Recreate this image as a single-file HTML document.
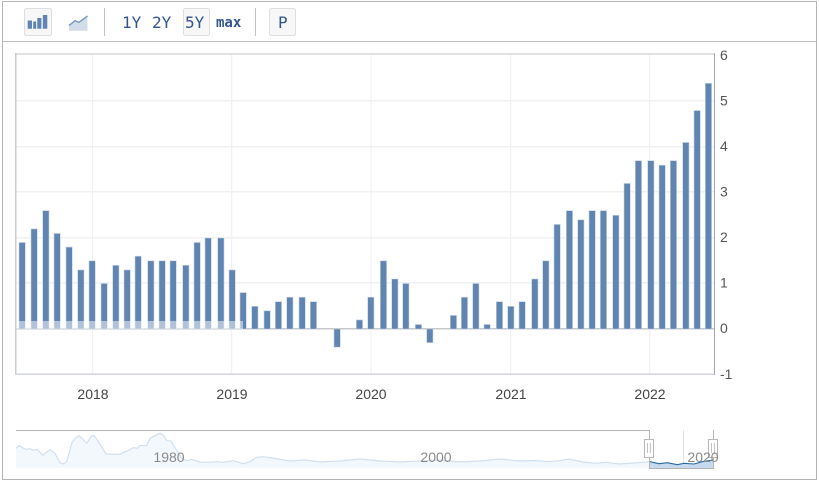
<!DOCTYPE html>
<html><head><meta charset="utf-8"><style>
html,body{margin:0;padding:0;background:#fff;width:819px;height:483px;overflow:hidden}
svg{display:block}
text{font-family:"Liberation Sans",sans-serif}
text.m{font-family:"DejaVu Sans Mono",monospace}
</style></head><body>
<svg width="819" height="483" viewBox="0 0 819 483" xmlns="http://www.w3.org/2000/svg">
<rect x="2.5" y="1.5" width="814" height="478" fill="#fff" stroke="#b4b4b4"/>
<rect x="3" y="41" width="813" height="1" fill="#bfbfbf"/>
<!-- toolbar -->
<rect x="24.5" y="8.5" width="27" height="27" rx="2" fill="#f7f7f7" stroke="#dedede"/>
<rect x="183.5" y="8.5" width="26" height="27" rx="2" fill="#f7f7f7" stroke="#dedede"/>
<rect x="269.5" y="8.5" width="26" height="27" rx="2" fill="#f7f7f7" stroke="#dedede"/>
<rect x="104" y="8" width="1" height="28" fill="#c4c4c4"/>
<rect x="255" y="8" width="1" height="28" fill="#c4c4c4"/>
<path d="M27.700 20.500h4.300v8.200h-4.300zM33.200 21.500h3v7.200h-3zM37.300 18h4.100v10.700h-4.100zM42.800 15h4.500v13.700h-4.500z" fill="#5f85b0"/>
<path d="M69 25.500L75 20.700L79 22.300L87.500 16V30.700H69z" fill="#d3dce9"/>
<path d="M69 25.500L75 20.700L79 22.300L87.500 16" fill="none" stroke="#7f9cc2" stroke-width="1.500"/>
<g font-size="16" fill="#33558f">
<text class="m" x="122" y="28">1Y</text>
<text class="m" x="152" y="28">2Y</text>
<text class="m" x="185" y="28">5Y</text>
<text class="m" x="216" y="27" font-size="14" font-weight="700">max</text>
<text class="m" x="278" y="28">P</text>
</g>
<!-- grid -->
<g fill="#f1f1f3">
<rect x="16" y="100" width="698" height="1.500"/>
<rect x="16" y="146" width="698" height="1.500"/>
<rect x="16" y="191" width="698" height="1.500"/>
<rect x="16" y="237" width="698" height="1.500"/>
<rect x="16" y="282" width="698" height="1.500"/>
<rect x="92" y="54" width="1.200" height="320"/>
<rect x="231" y="54" width="1.200" height="320"/>
<rect x="370.500" y="54" width="1.200" height="320"/>
<rect x="510" y="54" width="1.200" height="320"/>
<rect x="649" y="54" width="1.200" height="320"/>
</g>
<rect x="16" y="328" width="698" height="1.500" fill="#c8c8c8"/>
<!-- plot border -->
<rect x="15" y="53" width="700" height="2" fill="#e2e2e2"/>
<rect x="15" y="53" width="1.500" height="322" fill="#c8cbd0"/>
<rect x="15" y="373.500" width="700" height="1.500" fill="#d2d6dc"/>
<rect x="714" y="53" width="1" height="322" fill="#a8a8a8"/>
<!-- bars -->
<path fill="#5f85b0" stroke="#c3d3e7" stroke-width=".6" d="M19 242.500h6.300V329H19zM31 228.900h6.300V329H31zM42.700 210.700h6.300V329h-6.300zM54 233.500h6.300V329H54zM66 247.100h6.300V329H66zM77.700 269.900h6.300V329h-6.300zM89 260.800h6.300V329H89zM101 283.500h6.300V329H101zM112.700 265.300h6.300V329h-6.300zM124 269.900h6.300V329H124zM135 256.200h6.300V329H135zM147.700 260.800h6.300V329h-6.300zM159 260.800h6.300V329H159zM170 260.800h6.300V329H170zM182.700 265.300h6.300V329h-6.300zM194 242.500h6.300V329H194zM205 238h6.300V329H205zM217.700 238h6.300V329h-6.300zM229 269.900h6.300V329H229zM240 292.600h6.300V329H240zM251.700 306.300h6.300V329h-6.300zM264 310.800h6.300V329H264zM275.300 301.700h6.300V329h-6.300zM286.700 297.200h6.300V329h-6.300zM299 297.200h6.300V329H299zM310.300 301.700h6.300V329h-6.300zM334 329h6.300v18.200H334zM356.300 319.900h6.300V329h-6.300zM367.700 297.200h6.300V329h-6.300zM380.300 260.800h6.300V329h-6.300zM391.700 279h6.300V329h-6.300zM402.700 283.500h6.300V329h-6.300zM415.300 324.500h6.300V329h-6.300zM426.700 329h6.300v13.700h-6.300zM450.300 315.400h6.300V329h-6.300zM461.300 297.200h6.300V329h-6.300zM472.700 283.500h6.300V329h-6.300zM484 324.500h6.300V329H484zM496.300 301.700h6.300V329h-6.300zM507.700 306.300h6.300V329h-6.300zM519 301.700h6.300V329H519zM531.700 279h6.300V329h-6.300zM542.700 260.800h6.300V329h-6.300zM554 224.400h6.300V329H554zM566.300 210.700h6.300V329h-6.300zM577.700 219.800h6.300V329h-6.300zM589 210.700h6.300V329H589zM600.300 210.700h6.300V329h-6.300zM612.700 215.300h6.300V329h-6.300zM624 183.400h6.300V329H624zM635.300 160.700h6.300V329h-6.300zM647.700 160.700h6.300V329h-6.300zM659 165.200h6.300V329H659zM670.300 160.700h6.300V329h-6.300zM682.700 142.500h6.300V329h-6.300zM694 110.600h6.300V329H694zM705.300 83.300h6.300V329h-6.300z"/>
<rect x="16.500" y="321" width="226.500" height="8" fill="#fff" fill-opacity=".5"/>
<!-- labels -->
<g font-size="14" fill="#555">
<text x="720" y="60">6</text>
<text x="720" y="105.500">5</text>
<text x="720" y="151">4</text>
<text x="720" y="196.500">3</text>
<text x="720" y="242">2</text>
<text x="720" y="287.500">1</text>
<text x="720" y="333">0</text>
<text x="720" y="379">-1</text>
</g>
<g font-size="14" fill="#444" text-anchor="middle">
<text x="93" y="399">2018</text>
<text x="232" y="399">2019</text>
<text x="371" y="399">2020</text>
<text x="511" y="399">2021</text>
<text x="650" y="399">2022</text>
</g>
<!-- navigator -->
<path d="M16 448.300L19.300 445.300L23.300 448.300L26.700 449.300L30 448.700L33.300 450.300L37.300 449.300L42.700 455.300L50 449.700L55 453.300L60 462.700L63.300 464L66.700 461.700L71.700 443.300L75 438.300L79.300 435.700L82.700 439L86.700 443.300L91.700 435.700L94.300 435.700L98.300 441.700L106 454L120 454.300L123.300 452.300L128.300 450.700L133.300 447.700L137.300 448.300L140 445.300L146.700 445.700L150 438.300L155 435.700L160 433.300L163.300 435L166.700 440.700L170.700 441L175 447.700L181.700 458.300L186.700 460.700L191.700 459.300L200 462L210 462.300L216.700 461.700L223.300 462.300L233.300 460.700L243.300 463.700L250 461.700L256.700 457.300L263.300 456.700L275 458.500L290 461L305 460L320 462L340 461L360 459L380 461L400 462L420 461L440 460L460 462L480 461L500 459L520 461L535 460.500L549 461.700L559 460.700L569 459L582.300 462L595.700 463.300L605.700 462.300L619 464L639 462.700L650 461.700V467.700H16z" fill="#f3f8fd"/>
<path d="M16 448.300L19.300 445.300L23.300 448.300L26.700 449.300L30 448.700L33.300 450.300L37.300 449.300L42.700 455.300L50 449.700L55 453.300L60 462.700L63.300 464L66.700 461.700L71.700 443.300L75 438.300L79.300 435.700L82.700 439L86.700 443.300L91.700 435.700L94.300 435.700L98.300 441.700L106 454L120 454.300L123.300 452.300L128.300 450.700L133.300 447.700L137.300 448.300L140 445.300L146.700 445.700L150 438.300L155 435.700L160 433.300L163.300 435L166.700 440.700L170.700 441L175 447.700L181.700 458.300L186.700 460.700L191.700 459.300L200 462L210 462.300L216.700 461.700L223.300 462.300L233.300 460.700L243.300 463.700L250 461.700L256.700 457.300L263.300 456.700L275 458.500L290 461L305 460L320 462L340 461L360 459L380 461L400 462L420 461L440 460L460 462L480 461L500 459L520 461L535 460.500L549 461.700L559 460.700L569 459L582.300 462L595.700 463.300L605.700 462.300L619 464L639 462.700L650 461.700" fill="none" stroke="#d2e0ee" stroke-width="1.200" stroke-linejoin="round"/>
<rect x="683" y="430" width="1" height="38" fill="#e4e4e4"/>
<path d="M650 461.700L659 463.700L667.300 462.700L677.300 464.700L684 463.300L694 464L702.300 461.700L712.300 460.300L713 460V468H650z" fill="#c6d9ee"/>
<path d="M650 461.700L659 463.700L667.300 462.700L677.300 464.700L684 463.300L694 464L702.300 461.700L713 460" fill="none" stroke="#2d6ba3" stroke-width="1.100" stroke-linejoin="round"/>
<path d="M16 430.500H649.500V468.500H713.500V430" fill="none" stroke="#b4b4b4"/>
<g font-size="14" fill="#8a8a8a" text-anchor="middle">
<text x="169" y="462">1980</text>
<text x="436" y="462">2000</text>
</g>
<rect x="644.500" y="439.500" width="9" height="18" fill="#fff" fill-opacity=".9" stroke="#b8b8b8"/>
<path d="M647.500 443v10M650.500 443v10" stroke="#c4c4c4" fill="none"/>
<rect x="708.500" y="439.500" width="9" height="18" fill="#fff" stroke="#b8b8b8"/>
<path d="M711.500 443v10M714.500 443v10" stroke="#c4c4c4" fill="none"/>
<text x="703" y="462" font-size="14" fill="#8a8a8a" text-anchor="middle">2020</text>
</svg>
</body></html>
